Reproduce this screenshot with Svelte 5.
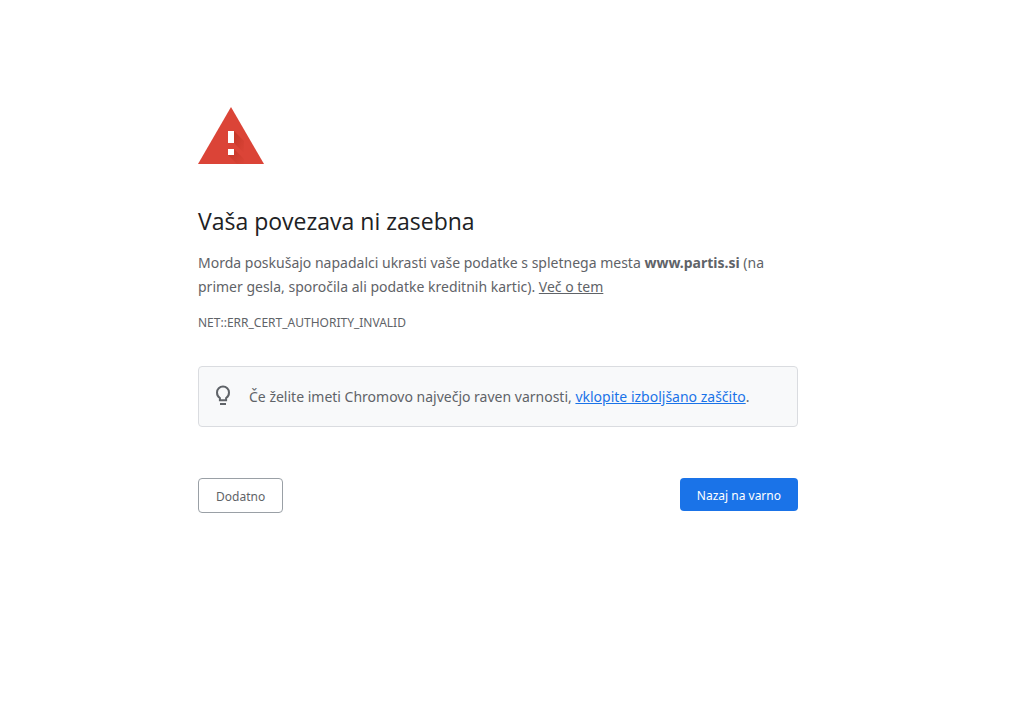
<script>
	const host = 'www.partis.si';
	const errorCode = 'NET::ERR_CERT_AUTHORITY_INVALID';

	let showDetails = false;

	const toggleDetails = () => {
		showDetails = !showDetails;
	};

	const goBack = () => {
		history.back();
	};
</script>

<div class="page">
	<main>
		<svg class="warning" viewBox="0 0 66 57" role="img" aria-label="Opozorilo">
			<defs>
				<linearGradient id="shade" x1="0" y1="0" x2="1" y2="1">
					<stop offset="0" stop-color="#a52714" stop-opacity="0.45" />
					<stop offset="1" stop-color="#a52714" stop-opacity="0" />
				</linearGradient>
			</defs>
			<path d="M33 0 66 57H0z" fill="#db4437" />
			<path d="M36 24 46 34V46L36 36z" fill="url(#shade)" />
			<path d="M36 42 46 52V57H39L30 48z" fill="url(#shade)" />
			<path d="M30 24h6v12h-6zM30 42h6v6h-6z" fill="#fff" />
		</svg>

		<h1>Vaša povezava ni zasebna</h1>
		<p>
			Morda poskušajo napadalci ukrasti vaše podatke s spletnega mesta <strong>{host}</strong> (na
			primer gesla, sporočila ali podatke kreditnih kartic). <a href="#vec">Več o tem</a>
		</p>
		<div class="error-code">{errorCode}</div>

		<div class="promo">
			<svg class="bulb" viewBox="0 0 24 24" aria-hidden="true">
				<path d="M8.900 15.200V13C7 11.900 6 9.900 6 7.500a6 6 0 0 1 12 0c0 2.400-1 4.400-2.900 5.500v2.200z" fill="none" stroke="#5f6368" stroke-width="2" />
				<path d="M9 18h6v2H9z" fill="#5f6368" />
			</svg>
			<div>
				Če želite imeti Chromovo največjo raven varnosti, <a href="#zascita">vklopite izboljšano zaščito</a>.
			</div>
		</div>

		<div class="buttons">
			<button class="secondary" on:click={toggleDetails}>Dodatno</button>
			<button class="primary" on:click={goBack}>Nazaj na varno</button>
		</div>

		{#if showDetails}
			<p class="details">{host}</p>
		{/if}
	</main>
</div>

<style>
	:global(body) {
		background: #fff;
		color: #5f6368;
		font-family: "Noto Sans", "Open Sans", sans-serif;
		font-size: 14px;
	}

	.page {
		padding: 107px 37px 48px 0;
	}

	main {
		max-width: 600px;
		margin: 0 auto;
		line-height: 24px;
	}

	.warning {
		display: block;
		width: 66px;
		height: 57px;
	}

	h1 {
		margin: 41px 0 14px;
		color: #202124;
		font-family: "Open Sans", "Noto Sans", sans-serif;
		font-size: 23px;
		font-weight: 400;
		line-height: 32px;
	}

	p {
		margin: 0;
	}

	p a {
		color: inherit;
	}

	.error-code {
		margin-top: 12px;
		font-size: 12px;
	}

	.promo {
		display: flex;
		align-items: flex-start;
		gap: 14px;
		margin-top: 31px;
		padding: 18px 12px 17px;
		border: 1px solid #dadce0;
		border-radius: 4px;
		background: #f8f9fa;
	}

	.promo a {
		color: #1a73e8;
	}

	.bulb {
		flex: none;
		width: 24px;
		height: 24px;
	}

	.buttons {
		display: flex;
		align-items: flex-start;
		justify-content: space-between;
		margin-top: 51px;
	}

	button {
		padding: 9px 17px 7px;
		border: none;
		border-radius: 4px;
		font: inherit;
		font-size: 12px;
		line-height: 17px;
		cursor: pointer;
	}

	.primary {
		background: #1a73e8;
		color: #fff;
	}

	.secondary {
		border: 1px solid #9aa0a6;
		background: #fff;
		color: #5f6368;
	}

	.details {
		margin-top: 24px;
	}
</style>
